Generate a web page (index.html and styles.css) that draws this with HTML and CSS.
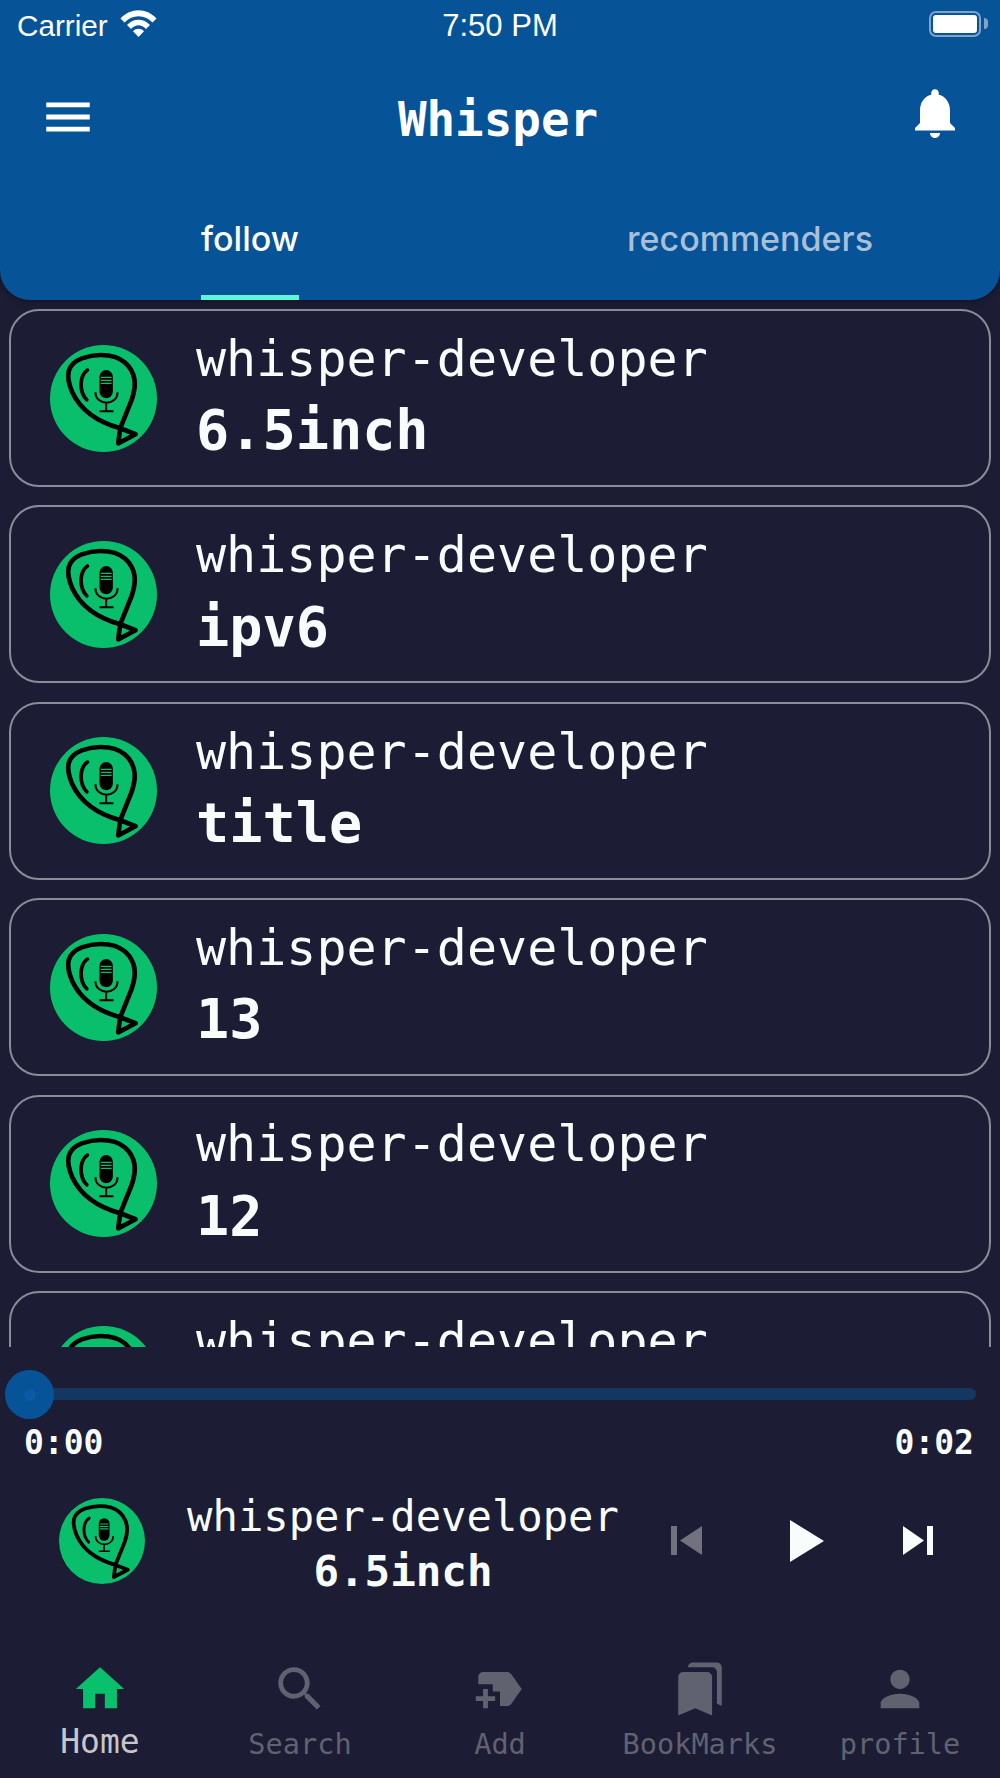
FILE: index.html
```html
<!DOCTYPE html>
<html lang="en">
<head>
<meta charset="utf-8">
<title>Whisper</title>
<link rel="stylesheet" href="styles.css">
</head>
<body>
<svg class="defs" width="0" height="0" aria-hidden="true">
  <symbol id="logo" viewBox="60 43 320 320">
    <circle cx="220" cy="203" r="160" fill="#09bf6c"/>
    <path d="M270 292C205 274 152 238 127 185C104 132 112 100 155 83C205 65 268 70 296 108C320 140 316 172 304 208L270 292L264 337L316 310Z" fill="none" stroke="#000" stroke-width="14" stroke-linejoin="round"/>
    <path d="M172 118C148 135 146 182 170 207" fill="none" stroke="#000" stroke-width="11" stroke-linecap="round"/>
    <path d="M208 182V138a20 20 0 0 1 40 0V182a20 20 0 0 1-40 0Z" fill="#000"/>
    <path d="M212 140H244M212 149H244M212 158H244" stroke="#09bf6c" stroke-width="4"/>
    <path d="M196 184C196 226 262 226 262 184M228 216V240M208 241H250" fill="none" stroke="#000" stroke-width="6"/>
  </symbol>
</svg>
<header class="header">
  <div class="status">
    <div class="status-left">
      <span class="carrier">Carrier</span>
      <svg class="wifi" viewBox="0 0 37 27"><path d="M0.5 8.5C10.5-2.5 26.5-2.5 36.5 8.5L32.5 12.5C24.5 4 12.5 4 4.5 12.5Z" fill="#fff"/><path d="M7 15C13.5 8 23.5 8 30 15L26 19C21 14 16 14 11 19Z" fill="#fff"/><path d="M13 21.2C16.5 18 20.500 18 24 21.2L18.500 27Z" fill="#fff"/></svg>
    </div>
    <span class="clock">7:50 PM</span>
    <div class="battery"><span class="battery-fill"></span><span class="battery-nub"></span></div>
  </div>
  <div class="toolbar">
    <svg class="menu-icon" viewBox="0 0 24 24"><path d="M3 18h18v-2H3v2zm0-5h18v-2H3v2zm0-5h18V6H3v2z" fill="#fff"/></svg>
    <h1 class="title">Whisper</h1>
    <svg class="bell-icon" viewBox="0 0 24 24"><path d="M12 22c1.100 0 2-.9 2-2h-4c0 1.100.89 2 2 2zm6-6v-5c0-3.070-1.640-5.640-4.500-6.320V4c0-.83-.67-1.500-1.500-1.500s-1.500.67-1.500 1.500v.68C7.630 5.360 6 7.920 6 11v5l-2 2v1h16v-1l-2-2z" fill="#fff"/></svg>
  </div>
  <nav class="tabs">
    <div class="tab"><span class="tab-label tab-active">follow</span></div>
    <div class="tab"><span class="tab-label">recommenders</span></div>
  </nav>
</header>

<main class="list">
  <article class="card"><svg class="avatar"><use href="#logo"/></svg><div class="card-text"><div class="author">whisper-developer</div><div class="name">6.5inch</div></div></article>
  <article class="card"><svg class="avatar"><use href="#logo"/></svg><div class="card-text"><div class="author">whisper-developer</div><div class="name">ipv6</div></div></article>
  <article class="card"><svg class="avatar"><use href="#logo"/></svg><div class="card-text"><div class="author">whisper-developer</div><div class="name">title</div></div></article>
  <article class="card"><svg class="avatar"><use href="#logo"/></svg><div class="card-text"><div class="author">whisper-developer</div><div class="name">13</div></div></article>
  <article class="card"><svg class="avatar"><use href="#logo"/></svg><div class="card-text"><div class="author">whisper-developer</div><div class="name">12</div></div></article>
  <article class="card"><svg class="avatar"><use href="#logo"/></svg><div class="card-text"><div class="author">whisper-developer</div><div class="name">11</div></div></article>
</main>

<section class="player">
  <div class="slider"><div class="track"><span class="thumb"><span class="thumb-dot"></span></span></div></div>
  <div class="times"><span>0:00</span><span>0:02</span></div>
  <div class="now">
    <svg class="now-avatar"><use href="#logo"/></svg>
    <div class="now-text"><div class="now-author">whisper-developer</div><div class="now-name">6.5inch</div></div>
    <div class="controls">
      <svg class="ctl-prev" viewBox="0 0 31 29"><path d="M0 0h6v29H0zM31 0v29L9 14.500z" fill="#72727f"/></svg>
      <svg class="ctl-play" viewBox="0 0 34 42"><path d="M0 0L34 21L0 42z" fill="#f8fdfb"/></svg>
      <svg class="ctl-next" viewBox="0 0 30 29"><path d="M0 0L21 14.500L0 29zM24 0h6v29h-6z" fill="#f8fdfb"/></svg>
    </div>
  </div>
</section>

<nav class="bottom">
  <div class="item item-active"><svg class="item-icon" viewBox="0 0 24 24"><path d="M10 20v-6h4v6h5v-8h3L12 3 2 12h3v8z"/></svg><span class="item-label">Home</span></div>
  <div class="item"><svg class="item-icon" viewBox="0 0 24 24"><path d="M15.500 14h-.79l-.28-.27C15.410 12.590 16 11.110 16 9.500 16 5.910 13.090 3 9.500 3S3 5.910 3 9.500 5.910 16 9.500 16c1.610 0 3.090-.59 4.230-1.570l.27.28v.79l5 4.990L20.490 19l-4.990-5zm-6 0C7.010 14 5 11.990 5 9.500S7.010 5 9.500 5 14 7.010 14 9.500 11.990 14 9.500 14z"/></svg><span class="item-label">Search</span></div>
  <div class="item"><svg class="item-icon" viewBox="0 0 24 24"><path d="M21 12l-4.370 6.160c-.37.52-.98.84-1.630.84h-3v-6H9v-3H3V7c0-1.100.9-2 2-2h10c.65 0 1.260.32 1.630.84L21 12zM10 15H7v-3H5v3H2v2h3v3h2v-3h3v-2z"/></svg><span class="item-label">Add</span></div>
  <div class="item"><svg class="item-icon" viewBox="0 0 24 24"><path d="M19 18l2 1V3c0-1.100-.9-2-1.990-2H8.990C7.890 1 7 1.900 7 3h10c1.100 0 2 .9 2 2v13zM15 5H5c-1.100 0-2 .9-2 2v16l7-3 7 3V7c0-1.100-.9-2-2-2z"/></svg><span class="item-label">BookMarks</span></div>
  <div class="item"><svg class="item-icon" viewBox="0 0 24 24"><path d="M12 12c2.210 0 4-1.790 4-4s-1.790-4-4-4-4 1.790-4 4 1.790 4 4 4zm0 2c-2.670 0-8 1.340-8 4v2h16v-2c0-2.660-5.330-4-8-4z"/></svg><span class="item-label">profile</span></div>
</nav>
</body>
</html>
```
FILE: styles.css
```css
* { box-sizing: border-box; }
html, body { margin: 0; padding: 0; }
body {
  width: 1000px;
  height: 1778px;
  overflow: hidden;
  display: flex;
  flex-direction: column;
  background: #1c1c35;
  color: #f8fdfb;
  font-family: "DejaVu Sans Mono", monospace;
}
.defs { position: absolute; }

.header {
  height: 300px;
  flex: none;
  display: flex;
  flex-direction: column;
  background: #065398;
  border-radius: 0 0 30px 30px;
  box-shadow: 0 2px 6px rgba(0, 0, 0, .3);
  position: relative;
}
.status {
  height: 52px;
  flex: none;
  display: grid;
  grid-template-columns: 1fr auto 1fr;
  align-items: center;
  padding: 0 15px;
  font-family: "Liberation Sans", sans-serif;
  font-size: 29.700px;
  color: #fff;
}
.status-left { display: flex; align-items: center; gap: 12px; padding-left: 2px; }
.wifi { width: 37px; height: 27px; margin-top: -5px; }
.clock { font-size: 31px; }
.battery {
  justify-self: end;
  width: 52px;
  height: 26px;
  margin-top: -4px;
  margin-right: 4px;
  border: 2.500px solid #7ea4c9;
  border-radius: 7px;
  padding: 2px;
  position: relative;
}
.battery-fill { display: block; height: 100%; background: #fff; border-radius: 3px; }
.battery-nub {
  position: absolute;
  right: -9px;
  top: 5px;
  width: 4px;
  height: 11px;
  background: #7ea4c9;
  border-radius: 0 4px 4px 0;
}
.toolbar {
  height: 132px;
  flex: none;
  display: flex;
  align-items: center;
  justify-content: space-between;
  padding: 0 35px 0 39px;
}
.menu-icon { width: 58px; height: 58px; margin-bottom: 3px; }
.bell-icon { width: 60px; height: 60px; margin-bottom: 10px; }
.title {
  margin: 4px 0 0;
  padding-right: 6px;
  font-size: 47.500px;
  font-weight: 700;
  color: #fff;
  line-height: 60px;
}
.tabs { flex: 1; display: flex; }
.tab { flex: 1; display: flex; justify-content: center; }
.tab-label {
  display: flex;
  align-items: center;
  padding-bottom: 2px;
  font-family: Inter, sans-serif;
  font-weight: 500;
  font-size: 34px;
  color: #a9bfd8;
  border-bottom: 5px solid transparent;
}
.tab-active { color: #fff; border-bottom-color: #5ff5dc; }

.list {
  flex: 1;
  min-height: 0;
  overflow: hidden;
  display: flex;
  flex-direction: column;
  gap: 18.400px;
  padding: 9px 9px 0 9px;
}
.card {
  height: 178px;
  flex: none;
  display: flex;
  align-items: center;
  border: 2px solid #8b8b99;
  border-radius: 30px;
  padding-left: 39px;
}
.avatar { width: 107px; height: 107px; flex: none; }
.card-text { margin-left: 39px; padding-bottom: 4px; }
.author { font-size: 50px; line-height: 66px; color: #f8fdfb; }
.name { margin-top: 2.400px; font-size: 55.200px; font-weight: 700; line-height: 72px; color: #f8fdfb; }

.player { height: 313px; flex: none; display: flex; flex-direction: column; }
.slider { padding: 41px 24px 0 30px; }
.track { height: 12px; background: #143762; border-radius: 6px; position: relative; }
.thumb {
  position: absolute;
  left: -25px;
  top: -18px;
  width: 49px;
  height: 49px;
  border-radius: 50%;
  background: #065398;
  display: flex;
  align-items: center;
  justify-content: center;
}
.thumb-dot { width: 12px; height: 12px; border-radius: 50%; background: #0a5aa6; }
.times {
  margin-top: 24px;
  display: flex;
  justify-content: space-between;
  padding: 0 26px 0 24px;
  font-size: 33px;
  font-weight: 700;
  line-height: 38px;
}
.now { margin-top: 36px; height: 85px; display: flex; align-items: center; padding-left: 59px; }
.now-avatar { width: 86px; height: 86px; flex: none; }
.now-text { margin-left: 42px; width: 432px; text-align: center; padding-top: 7.500px; }
.now-author { font-size: 42.200px; line-height: 52px; }
.now-name { margin-top: 3.500px; font-size: 42.500px; font-weight: 700; line-height: 52px; }
.controls { display: flex; align-items: center; margin-left: 52px; }
.ctl-prev { width: 31px; height: 29px; }
.ctl-play { width: 34px; height: 42px; margin-left: 88px; }
.ctl-next { width: 30px; height: 29px; margin-left: 79px; }

.bottom { flex: none; height: 118px; display: grid; grid-template-columns: repeat(5, 200px); }
.item { display: flex; flex-direction: column; align-items: center; color: #616270; }
.item-icon { width: 58px; height: 58px; fill: currentColor; flex: none; }
.item-label { font-size: 28.600px; line-height: 40px; margin-top: 6px; white-space: nowrap; }
.item-active .item-icon { fill: #09c16c; }
.item-active .item-label { color: #c6c6cb; font-size: 33px; margin-top: 4px; }
```
